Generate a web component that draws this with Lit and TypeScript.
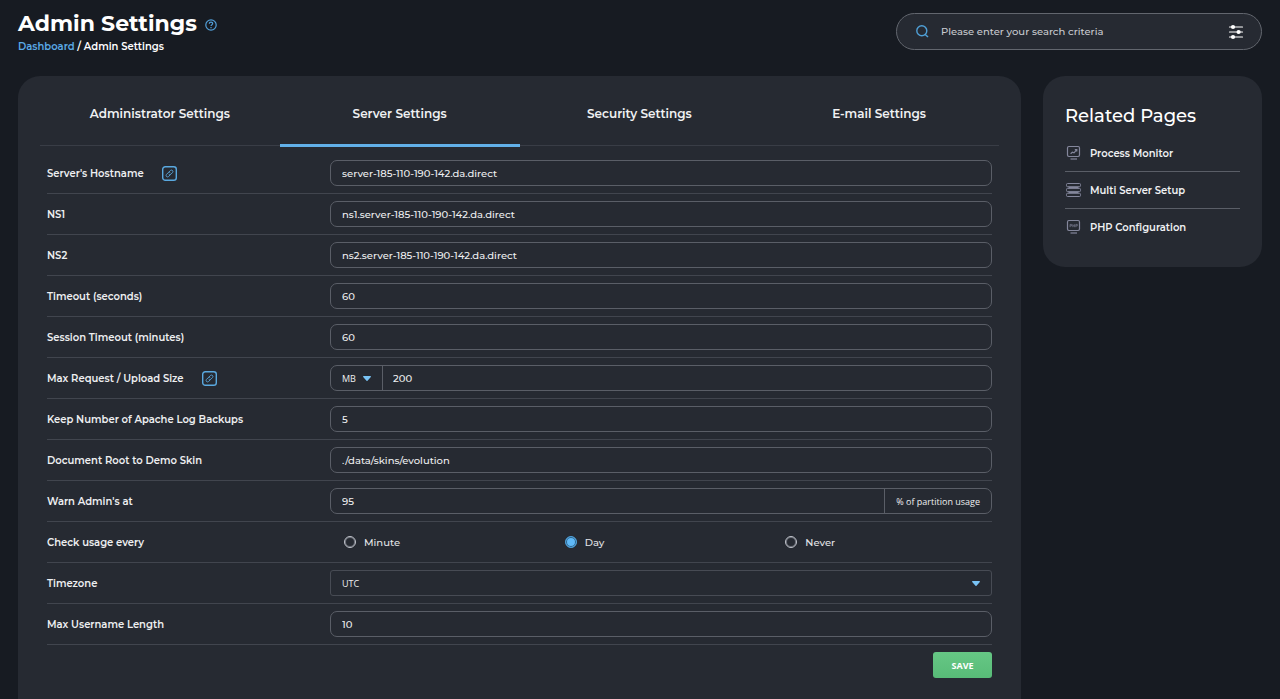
import { LitElement, html, css, nothing } from "lit";
import { customElement, state, property } from "lit/decorators.js";
import { classMap } from "lit/directives/class-map.js";

const caret = html`<svg class="caret" width="8" height="5" viewBox="0 0 8 5" aria-hidden="true">
  <path d="M0.6 0H7.4C7.9 0 8.1 0.5 7.8 0.9L4.5 4.7C4.2 5 3.8 5 3.5 4.7L0.2 0.9C-0.1 0.5 0.1 0 0.6 0Z" fill="currentColor" />
</svg>`;

@customElement("related-pages")
class RelatedPages extends LitElement {
  static styles = css`
    :host {
      display: block;
    }
    .card {
      padding: 22px;
      border-radius: 22px;
      background: #262a32;
    }
    .title {
      margin: 0;
      font-size: 18px;
      line-height: 37px;
      font-weight: 500;
      color: #fff;
    }
    .list {
      margin: 0;
      padding: 0;
      list-style: none;
    }
    .item + .item {
      border-top: 1px solid #5a5e67;
    }
    .link {
      display: flex;
      align-items: center;
      gap: 8px;
      height: 36px;
      font-size: 10px;
      font-weight: 600;
      color: #f0f1f3;
      text-decoration: none;
    }
    .icon {
      flex: none;
      color: #84879c;
    }
  `;

  render() {
    return html`
      <aside class="card">
        <h2 class="title">Related Pages</h2>
        <ul class="list">
          <li class="item">
            <a class="link" href="#process-monitor">
              <svg class="icon" width="17" height="16" viewBox="0 0 17 16" fill="none" stroke="currentColor" stroke-width="1.2" aria-hidden="true">
                <rect x="2.5" y="1.5" width="12" height="10" rx="1.4" />
                <path d="M5.5 14H12" />
                <path d="M5.6 8.8L7.4 7.2L9 7.8L11.6 4.8M9.8 4.6H11.8V6.6" />
              </svg>
              Process Monitor
            </a>
          </li>
          <li class="item">
            <a class="link" href="#multi-server">
              <svg class="icon" width="17" height="16" viewBox="0 0 17 16" fill="none" stroke="currentColor" stroke-width="1" aria-hidden="true">
                <rect x="1.5" y="1.5" width="14" height="3.2" rx="1" />
                <rect x="1.5" y="6.4" width="14" height="3.2" rx="1" />
                <rect x="1.5" y="11.3" width="14" height="3.2" rx="1" />
                <path d="M3.5 5.5H13.5M3.5 10.5H13.5" />
              </svg>
              Multi Server Setup
            </a>
          </li>
          <li class="item">
            <a class="link" href="#php">
              <svg class="icon" width="17" height="16" viewBox="0 0 17 16" fill="none" stroke="currentColor" stroke-width="1.2" aria-hidden="true">
                <rect x="2.5" y="1.5" width="12" height="10" rx="1.4" />
                <path d="M5.5 14H12" />
                <path d="M5 8.2V5.4H6.5V6.9H5M7.8 5.2V8.2M9.4 5.2V8.2M7.8 6.8H9.4M10.8 8.2V5.4H12.3V6.9H10.8" stroke-width="0.6" />
              </svg>
              PHP Configuration
            </a>
          </li>
        </ul>
      </aside>
    `;
  }
}

@customElement("setting-row")
class SettingRow extends LitElement {
  @property() label = "";
  @property() value = "";
  @property() unit = "";
  @property() suffix = "";
  @property() kind = "text";
  @property({ type: Boolean }) link = false;
  @property({ attribute: false }) options: string[] = [];

  static styles = css`
    :host {
      display: block;
    }
    .row {
      display: grid;
      grid-template-columns: 283px minmax(0, 1fr);
      align-items: center;
      padding: 7px 0;
      border-bottom: 1px solid #41454e;
    }
    .name {
      display: flex;
      align-items: center;
      gap: 18px;
      font-size: 10px;
      font-weight: 600;
      color: #eeeff1;
    }
    .chain {
      display: flex;
      padding: 0;
      border: 0;
      background: none;
      color: #5aa9e0;
    }
    .field {
      display: flex;
      box-sizing: border-box;
      width: 100%;
      height: 26px;
      border: 1px solid #5a5e67;
      border-radius: 7px;
      overflow: hidden;
    }
    .field.square {
      border-radius: 3px;
      border-color: #474b54;
    }
    .input,
    .select {
      box-sizing: border-box;
      min-width: 0;
      padding: 0 11px;
      border: 0;
      outline: 0;
      background: transparent;
      font-family: inherit;
      font-size: 10px;
      font-weight: 500;
      color: #eeeff1;
      appearance: none;
    }
    .input {
      flex: 1;
    }
    .input.after {
      padding: 0 10px;
    }
    .picker {
      display: grid;
      flex: 1;
      align-items: center;
    }
    .picker.unit {
      flex: 0 0 51px;
      border-right: 1px solid #5a5e67;
    }
    .picker .select,
    .picker .caret {
      grid-area: 1 / 1;
    }
    .select {
      width: 100%;
      height: 100%;
      font-family: "Open Sans", sans-serif;
      font-size: 9px;
      font-weight: 500;
    }
    .caret {
      justify-self: end;
      margin-right: 11px;
      pointer-events: none;
      color: #79c3f5;
    }
    .suffix {
      display: flex;
      align-items: center;
      padding: 0 11px;
      border-left: 1px solid #5a5e67;
      font-family: "Open Sans", sans-serif;
      font-size: 9px;
      font-weight: 400;
      color: #eeeff1;
    }
    .radios {
      display: grid;
      grid-template-columns: repeat(3, 1fr);
      height: 26px;
      margin: 0;
      padding: 0;
      border: 0;
    }
    .choice {
      display: flex;
      align-items: center;
      gap: 8px;
      padding-left: 14px;
      font-size: 10px;
      font-weight: 500;
      color: #e3e4e7;
    }
    .radio {
      box-sizing: border-box;
      width: 12px;
      height: 12px;
      margin: 0;
      border: 1px solid #c3c6ce;
      border-radius: 50%;
      box-shadow: inset 0 0 0 1px #6c7079;
      appearance: none;
    }
    .radio:checked {
      border: 1px solid #4d9fd8;
      background: #5fb9f8;
      box-shadow: inset 0 0 0 1px #2d5f85;
    }
  `;

  private picker(isUnit: boolean) {
    const current = isUnit ? this.unit : this.value;
    return html`<div class=${classMap({ picker: true, unit: isUnit })}>
      <select class="select" id=${isUnit ? "unit" : "control"} aria-label=${isUnit ? "Size unit" : nothing}>
        ${this.options.map((o) => html`<option ?selected=${o === current}>${o}</option>`)}
      </select>
      ${caret}
    </div>`;
  }

  private control() {
    if (this.kind === "radio") {
      return html`<div class="radios" role="radiogroup" aria-labelledby="name">
        ${this.options.map(
          (o) => html`<label class="choice">
            <input class="radio" type="radio" name="usage" .checked=${o === this.value} />
            ${o}
          </label>`
        )}
      </div>`;
    }
    if (this.kind === "select") {
      return html`<div class="field square">${this.picker(false)}</div>`;
    }
    return html`<div class="field">
      ${this.unit ? this.picker(true) : nothing}
      <input class=${classMap({ input: true, after: !!this.unit })} id="control" type="text" .value=${this.value} />
      ${this.suffix ? html`<span class="suffix">${this.suffix}</span>` : nothing}
    </div>`;
  }

  render() {
    return html`<div class="row">
      <div class="name">
        ${this.kind === "radio"
          ? html`<span id="name">${this.label}</span>`
          : html`<label for="control">${this.label}</label>`}
        ${this.link
          ? html`<button class="chain" type="button" aria-label="Open link">
              <svg width="15" height="15" viewBox="0 0 15 15" fill="none" stroke="currentColor" aria-hidden="true">
                <rect x="0.7" y="0.7" width="13.6" height="13.6" rx="2.6" stroke-width="1.4" />
                <path d="M6.5 6.4L8.3 4.6C9 3.9 9.9 3.9 10.5 4.5C11.1 5.1 11.1 6 10.4 6.7L8.8 8.3C8.1 9 7.2 8.9 6.7 8.3M8.5 8.6L6.7 10.4C6 11.1 5.1 11.1 4.5 10.5C3.9 9.9 3.9 9 4.6 8.3L6.2 6.7C6.9 6 7.8 6.1 8.3 6.7" stroke-width="0.9" />
              </svg>
            </button>`
          : nothing}
      </div>
      ${this.control()}
    </div>`;
  }
}

@customElement("app-root")
class AppRoot extends LitElement {
  @state() private active = 1;

  private tabs = ["Administrator Settings", "Server Settings", "Security Settings", "E-mail Settings"];

  static styles = css`
    :host {
      display: block;
      font-family: Montserrat, Inter, sans-serif;
      color: #fff;
    }
    .page {
      display: flex;
      flex-direction: column;
      box-sizing: border-box;
      min-height: 100vh;
      padding: 0 18px;
      background: #171b22;
    }
    .header {
      display: flex;
      justify-content: space-between;
      align-items: flex-start;
      height: 76px;
    }
    .heading {
      padding-top: 8px;
    }
    .title-line {
      display: flex;
      align-items: center;
      gap: 8px;
    }
    .title {
      margin: 0;
      font-size: 22px;
      line-height: 31px;
      font-weight: 700;
    }
    .help {
      display: flex;
      padding: 3px 0 0;
      border: 0;
      background: none;
      color: #529fd8;
    }
    .crumbs {
      font-size: 10px;
      line-height: 16px;
      font-weight: 600;
    }
    .crumb {
      color: #5aa9e6;
      text-decoration: none;
    }
    .search {
      display: flex;
      align-items: center;
      box-sizing: border-box;
      width: 366px;
      height: 37px;
      margin-top: 13px;
      padding: 0 17px 0 18px;
      border: 1px solid #62666e;
      border-radius: 19px;
      background: #262a32;
    }
    .magnifier {
      flex: none;
      color: #4f9fd6;
    }
    .query {
      flex: 1;
      min-width: 0;
      padding: 0 12px;
      border: 0;
      outline: 0;
      background: transparent;
      font-family: inherit;
      font-size: 10px;
      font-weight: 500;
      color: #fff;
    }
    .query::placeholder {
      color: #c9cbd0;
    }
    .filters {
      display: flex;
      padding: 0;
      border: 0;
      background: none;
      color: #fff;
    }
    .columns {
      display: grid;
      grid-template-columns: minmax(0, 1fr) 219px;
      gap: 22px;
      flex: 1;
    }
    .panel {
      padding: 0 22px 22px;
      border-radius: 22px 22px 0 0;
      background: #262a32;
    }
    .tabs {
      display: grid;
      grid-template-columns: repeat(4, 1fr);
      height: 71px;
    }
    .tab {
      padding: 3px 0 0;
      border: 0;
      background: linear-gradient(#393d46, #393d46) 0 69px / 100% 1px no-repeat;
      font-family: inherit;
      font-size: 12px;
      font-weight: 600;
      color: #f0f1f3;
    }
    .tab.active {
      background: linear-gradient(#62b0e8, #62b0e8) 0 68px / 100% 3px no-repeat;
    }
    .form {
      padding: 6px 7px 0;
    }
    .actions {
      display: flex;
      justify-content: flex-end;
      padding-top: 7px;
    }
    .save {
      width: 59px;
      height: 26px;
      padding: 0;
      border: 0;
      border-radius: 3px;
      background: linear-gradient(#66c785, #58bc78);
      font-family: "Open Sans", sans-serif;
      font-size: 9px;
      font-weight: 700;
      color: #fff;
    }
  `;

  render() {
    return html`
      <div class="page">
        <header class="header">
          <div class="heading">
            <div class="title-line">
              <h1 class="title">Admin Settings</h1>
              <button class="help" type="button" aria-label="Help">
                <svg width="12" height="12" viewBox="0 0 12 12" fill="none" stroke="currentColor" stroke-width="1.2" aria-hidden="true">
                  <circle cx="6" cy="6" r="5.2" />
                  <path d="M4.3 4.8C4.3 3.8 5 3.1 6 3.1C7 3.1 7.7 3.7 7.7 4.6C7.7 5.7 6 5.7 6 7.1M6 8V9.2" />
                </svg>
              </button>
            </div>
            <nav class="crumbs" aria-label="Breadcrumb"><a class="crumb" href="#dashboard">Dashboard</a> / Admin Settings</nav>
          </div>
          <form class="search" role="search" @submit=${(e: Event) => e.preventDefault()}>
            <svg class="magnifier" width="14" height="14" viewBox="0 0 14 14" fill="none" stroke="currentColor" stroke-width="1.4" aria-hidden="true">
              <circle cx="6.8" cy="5.8" r="5" />
              <path d="M10.2 9.4L13 12" />
            </svg>
            <input class="query" type="search" aria-label="Search" placeholder="Please enter your search criteria" />
            <button class="filters" type="button" aria-label="Filters">
              <svg width="16" height="16" viewBox="0 0 16 16" fill="currentColor" aria-hidden="true">
                <path d="M1.5 3H14.5M1.5 8H14.5M1.5 13H14.5" stroke="currentColor" stroke-width="1.2" stroke-linecap="round" />
                <circle cx="5" cy="3" r="2.1" />
                <circle cx="10.6" cy="8" r="2.1" />
                <circle cx="5" cy="13" r="2.1" />
              </svg>
            </button>
          </form>
        </header>
        <div class="columns">
          <main class="panel">
            <div class="tabs" role="tablist">
              ${this.tabs.map(
                (t, i) => html`<button
                  class=${classMap({ tab: true, active: i === this.active })}
                  role="tab"
                  aria-selected=${i === this.active}
                  @click=${() => (this.active = i)}
                >${t}</button>`
              )}
            </div>
            <form class="form" @submit=${(e: Event) => e.preventDefault()}>
              <setting-row label="Server's Hostname" value="server-185-110-190-142.da.direct" link></setting-row>
              <setting-row label="NS1" value="ns1.server-185-110-190-142.da.direct"></setting-row>
              <setting-row label="NS2" value="ns2.server-185-110-190-142.da.direct"></setting-row>
              <setting-row label="Timeout (seconds)" value="60"></setting-row>
              <setting-row label="Session Timeout (minutes)" value="60"></setting-row>
              <setting-row label="Max Request / Upload Size" value="200" unit="MB" .options=${["MB"]} link></setting-row>
              <setting-row label="Keep Number of Apache Log Backups" value="5"></setting-row>
              <setting-row label="Document Root to Demo Skin" value="./data/skins/evolution"></setting-row>
              <setting-row label="Warn Admin's at" value="95" suffix="% of partition usage"></setting-row>
              <setting-row label="Check usage every" kind="radio" value="Day" .options=${["Minute", "Day", "Never"]}></setting-row>
              <setting-row label="Timezone" kind="select" value="UTC" .options=${["UTC"]}></setting-row>
              <setting-row label="Max Username Length" value="10"></setting-row>
              <div class="actions"><button class="save" type="submit">SAVE</button></div>
            </form>
          </main>
          <related-pages></related-pages>
        </div>
      </div>
    `;
  }
}
